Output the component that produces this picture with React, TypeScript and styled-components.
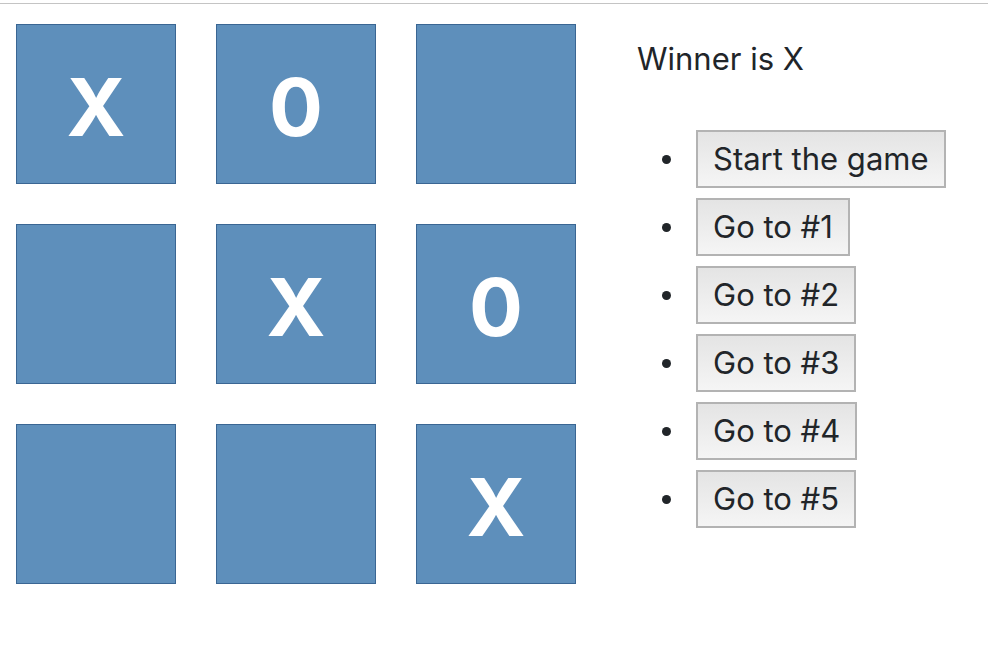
import React, { FC } from 'react';
import styled, { createGlobalStyle } from 'styled-components';

const GlobalStyle = createGlobalStyle`
  html, body {
    margin: 0;
    padding: 0;
    background: #fff;
  }

  body {
    font-family: Inter, "Liberation Sans", sans-serif;
    color: #212529;
  }
`;

const Page = styled.div`
  border-top: 1px solid #c4c4c4;
  margin-top: 3px;
  display: flex;
  align-items: flex-start;
  padding: 20px 16px;
`;

const Board = styled.div`
  display: grid;
  grid-template-columns: repeat(3, 160px);
  grid-auto-rows: 160px;
  gap: 40px;
`;

const Square = styled.button`
  box-sizing: border-box;
  width: 160px;
  height: 160px;
  margin: 0;
  padding: 6px 0 0;
  border: 1px solid #3a6693;
  background: #5e8fbb;
  color: #fff;
  font-family: Inter, "Liberation Sans", sans-serif;
  font-weight: 700;
  font-size: 80px;
  line-height: 1;
  display: flex;
  align-items: center;
  justify-content: center;
`;

const Info = styled.div`
  margin-left: 61px;
  padding-top: 15px;
`;

const Status = styled.div`
  font-size: 31px;
  line-height: 40px;
`;

const Moves = styled.ul`
  margin: 51px 0 0;
  padding-left: 25px;
  list-style: none;
`;

const Move = styled.li`
  display: flex;
  align-items: center;
  gap: 25px;
  margin-bottom: 10px;

  &::before {
    content: '';
    width: 9px;
    height: 9px;
    border-radius: 50%;
    background: #212529;
  }
`;

const MoveButton = styled.button`
  font-family: Inter, "Liberation Sans", sans-serif;
  font-size: 31px;
  line-height: 36px;
  color: #212529;
  padding: 9px 15px;
  border: 2px solid #b3b3b3;
  border-radius: 0;
  background: linear-gradient(#e4e4e4, #f5f5f5);
  cursor: pointer;
`;

const squares = ['X', '0', '', '', 'X', '0', '', '', 'X'];
const moves = ['Start the game', 'Go to #1', 'Go to #2', 'Go to #3', 'Go to #4', 'Go to #5'];

const App: FC = () => {
  return (
    <>
      <GlobalStyle />
      <Page>
        <Board>
          {squares.map((value, i) => (
            <Square key={i}>{value}</Square>
          ))}
        </Board>
        <Info>
          <Status>Winner is X</Status>
          <Moves>
            {moves.map((label) => (
              <Move key={label}>
                <MoveButton>{label}</MoveButton>
              </Move>
            ))}
          </Moves>
        </Info>
      </Page>
    </>
  );
};

export default App;
